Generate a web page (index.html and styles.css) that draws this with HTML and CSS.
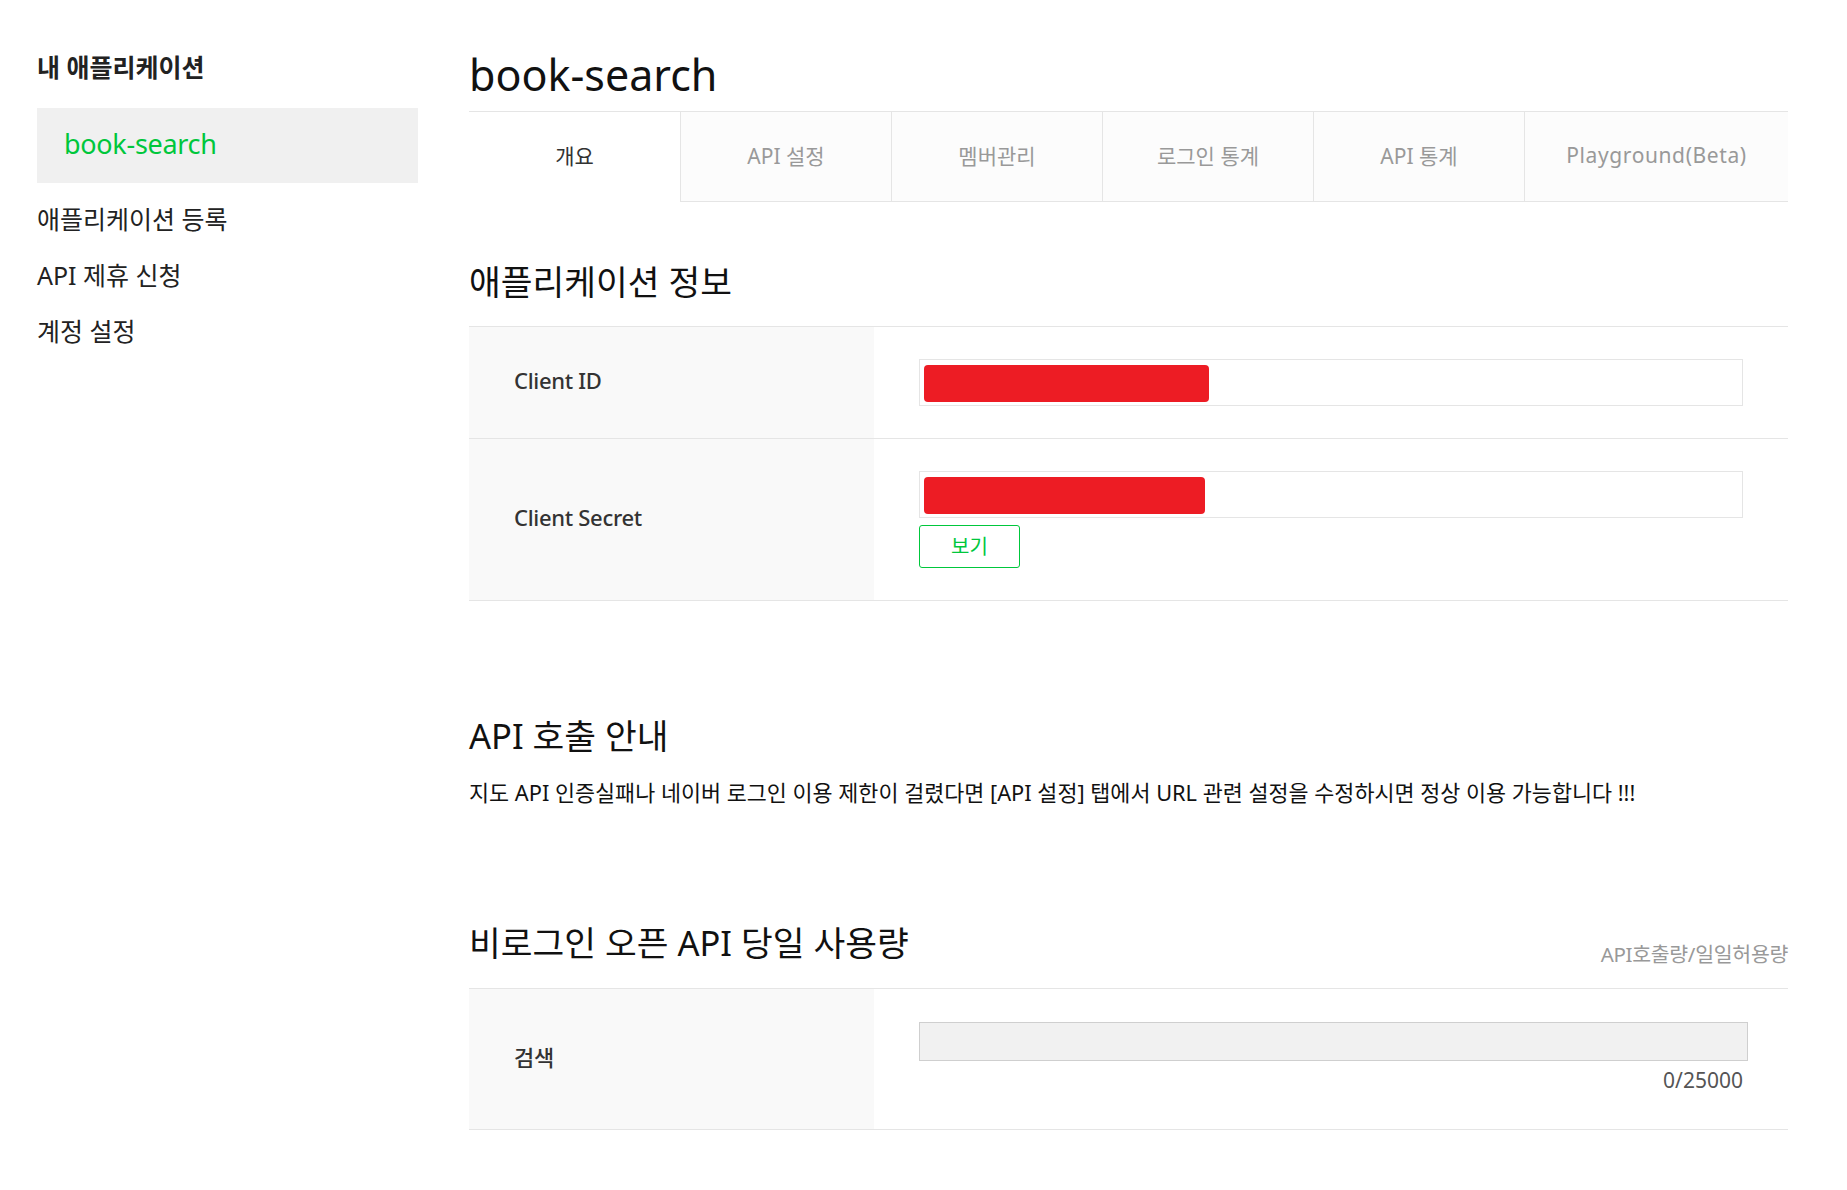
FILE: index.html
```html
<!DOCTYPE html>
<html lang="ko">
<head>
<meta charset="utf-8">
<title>book-search</title>
<link rel="stylesheet" href="styles.css">
</head>
<body>
<div class="page">
  <aside class="sidebar">
    <h2 class="side-title">내 애플리케이션</h2>
    <div class="side-active">book-search</div>
    <ul class="side-menu">
      <li>애플리케이션 등록</li>
      <li>API 제휴 신청</li>
      <li>계정 설정</li>
    </ul>
  </aside>
  <main class="main">
    <h1 class="app-title">book-search</h1>
    <nav class="tabs">
      <div class="tab active">개요</div>
      <div class="tab">API 설정</div>
      <div class="tab">멤버관리</div>
      <div class="tab">로그인 통계</div>
      <div class="tab">API 통계</div>
      <div class="tab last">Playground(Beta)</div>
    </nav>

    <h3 class="section-title first">애플리케이션 정보</h3>
    <div class="info-table">
      <div class="row row-id">
        <div class="label">Client ID</div>
        <div class="value">
          <div class="field"><span class="mask mask-id"></span></div>
        </div>
      </div>
      <div class="row row-secret">
        <div class="label">Client Secret</div>
        <div class="value">
          <div class="field"><span class="mask mask-secret"></span></div>
          <button class="btn-view" type="button">보기</button>
        </div>
      </div>
    </div>

    <h3 class="section-title gap">API 호출 안내</h3>
    <p class="notice">지도 API 인증실패나 네이버 로그인 이용 제한이 걸렸다면 [API 설정] 탭에서 URL 관련 설정을 수정하시면 정상 이용 가능합니다 !!!</p>

    <div class="usage-head">
      <h3 class="section-title">비로그인 오픈 API 당일 사용량</h3>
      <span class="usage-caption">API호출량/일일허용량</span>
    </div>
    <div class="info-table usage-table">
      <div class="row row-usage">
        <div class="label">검색</div>
        <div class="value">
          <div class="bar"></div>
          <div class="count">0/25000</div>
        </div>
      </div>
    </div>
  </main>
</div>
</body>
</html>
```

FILE: styles.css
```css
* { box-sizing: border-box; }
html, body { margin: 0; padding: 0; background: #fff; }
body {
  font-family: "Noto Sans", "Noto Sans CJK KR", sans-serif;
  color: #222;
}
.page {
  display: flex;
  align-items: flex-start;
  padding-left: 37px;
}
.sidebar {
  width: 381px;
  flex: none;
  padding-top: 52px;
}
.side-title {
  margin: 0 0 26px;
  font-size: 25px;
  line-height: 30px;
  font-weight: 700;
  color: #222;
}
.side-active {
  height: 75px;
  background: #f0f0f0;
  display: flex;
  align-items: center;
  padding-left: 27px;
  padding-bottom: 4px;
  font-size: 27px;
  color: #00c73c;
  letter-spacing: -0.3px;
}
.side-menu {
  list-style: none;
  margin: 0;
  padding: 0;
  margin-top: 21px;
}
.side-menu li {
  font-size: 25px;
  line-height: 30px;
  color: #222;
}
.side-menu li + li { margin-top: 26px; }

.main {
  margin-left: 51px;
  width: 1319px;
  padding-top: 50px;
}
.app-title {
  margin: 0;
  font-size: 43px;
  line-height: 50px;
  font-weight: 400;
  color: #111;
}
.tabs {
  display: flex;
  margin-top: 11px;
  border-top: 1px solid #e5e5e5;
  height: 91px;
}
.tab {
  width: 211px;
  flex: none;
  display: flex;
  align-items: center;
  justify-content: center;
  padding-bottom: 4px;
  font-size: 21px;
  color: #999;
  background: #fcfcfc;
  border-left: 1px solid #e5e5e5;
  border-bottom: 1px solid #e5e5e5;
}
.tab.active {
  background: #fff;
  color: #333;
  border-left: none;
  border-bottom: none;
  padding-bottom: 5px;
}
.tab.last {
  flex: 1;
  width: auto;
  letter-spacing: 0.6px;
}

.section-title {
  margin: 0;
  font-size: 34.5px;
  line-height: 40px;
  font-weight: 400;
  color: #111;
}
.section-title.first { margin-top: 60px; margin-bottom: 24px; }
.section-title.gap { margin-top: 115px; }

.info-table {
  border-top: 1px solid #e5e5e5;
}
.row {
  display: flex;
  border-bottom: 1px solid #e5e5e5;
}
.label {
  width: 405px;
  flex: none;
  background: #f9f9f9;
  display: flex;
  align-items: center;
  padding-left: 45px;
  padding-bottom: 6px;
  font-size: 22px;
  font-weight: 500;
  color: #333;
  letter-spacing: -0.3px;
}
.value {
  flex: 1;
  padding: 32px 45px;
}
.field {
  height: 47px;
  border: 1px solid #e5e5e5;
  padding: 5px 4px;
}
.mask {
  display: block;
  height: 37px;
  background: #ed1c24;
  border-radius: 4px;
}
.mask-id { width: 285px; }
.mask-secret { width: 281px; }
.btn-view {
  display: block;
  margin-top: 7px;
  width: 101px;
  height: 43px;
  border: 1px solid #00c73c;
  border-radius: 3px;
  background: #fff;
  color: #00c73c;
  font-family: inherit;
  font-size: 20px;
  padding: 0 0 3px;
  cursor: pointer;
}

.notice {
  margin: 22px 0 0;
  font-size: 21.8px;
  line-height: 30px;
  color: #111;
}

.usage-head {
  margin-top: 115px;
  margin-bottom: 25px;
  display: flex;
  justify-content: space-between;
  align-items: flex-end;
}
.usage-caption {
  font-size: 20.5px;
  line-height: 26px;
  margin-bottom: -4px;
  color: #999;
  letter-spacing: -0.3px;
}
.row-usage .value {
  padding: 33px 40px 38px 45px;
}
.bar {
  height: 39px;
  background: #f1f1f1;
  border: 1px solid #cfcfcf;
}
.count {
  margin-top: 8px;
  text-align: right;
  padding-right: 5px;
  font-size: 21px;
  line-height: 22px;
  color: #555;
}
```
